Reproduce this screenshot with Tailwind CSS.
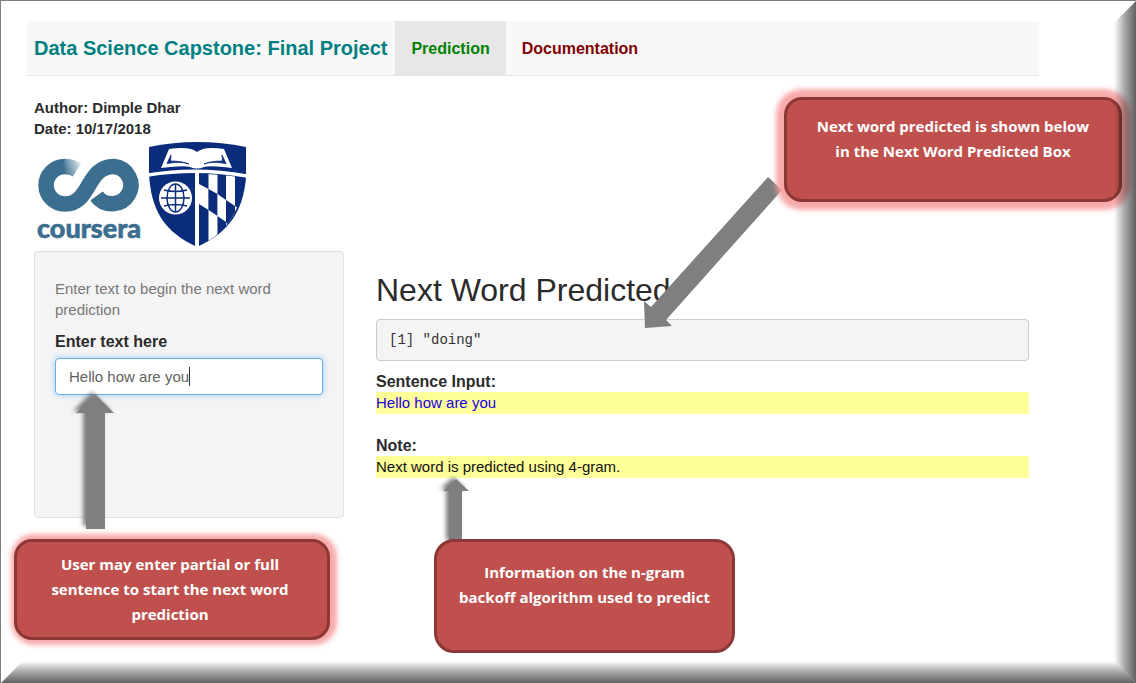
<!DOCTYPE html>
<html lang="en">
<head>
<meta charset="utf-8">
<meta name="viewport" content="width=device-width, initial-scale=1">
<title>Data Science Capstone: Final Project</title>
<script src="https://cdn.jsdelivr.net/npm/@tailwindcss/browser@4"></script>
</head>
<body class="bg-white font-['Liberation_Sans',Arial,sans-serif] text-[15px] leading-[21px] text-[#2b2b2b]">
<div class="relative min-h-screen overflow-hidden border-t border-l border-[#7d7d7d] pt-5 pr-[97px] pl-[25px]">

  <nav class="flex h-[55px] items-stretch border-b border-[#e7e7e7] bg-[#f8f8f8] text-[16px] font-bold">
    <a href="#" class="flex items-center pr-2 pl-2 text-[20px] whitespace-nowrap text-[#008080]">Data Science Capstone: Final Project</a>
    <a href="#prediction" aria-current="page" class="flex items-center bg-[#e7e7e7] px-4 text-[#008000]">Prediction</a>
    <a href="#documentation" class="flex items-center px-4 text-[#800000]">Documentation</a>
  </nav>

  <div class="pt-[21px] pr-2.5 pl-2">
    <p class="font-bold">Author: Dimple Dhar<br>Date: 10/17/2018</p>

    <div class="flex h-[112px]">
      <svg class="h-[111px] w-[112px]" viewBox="34 139 112 111" role="img" aria-label="Coursera">
        <defs>
          <linearGradient id="fade" gradientUnits="userSpaceOnUse" x1="64" y1="172" x2="81" y2="166">
            <stop offset="0" stop-color="#3c6e8f"/><stop offset="1" stop-color="#dbe6ec"/>
          </linearGradient>
        </defs>
        <g fill="none" stroke-width="15.500">
          <path d="M114 166.500 A19 18.700 0 1 1 96.500 196" stroke="#3c6e8f"/>
          <path d="M65 204 C91 204 86 166.500 114 166.500" stroke="#fff" stroke-width="19.500"/>
          <path d="M65 166.500 A18.900 18.700 0 1 0 65 204 C91 204 86 166.500 114 166.500 H115" stroke="#3c6e8f"/>
          <path d="M64.500 166.500 Q71.500 166.500 77 170" stroke="url(#fade)"/>
        </g>
        <text x="37" y="238" font-family="Lato, sans-serif" font-size="27" font-weight="900" fill="#3c6e8f" stroke="#3c6e8f" stroke-width=".6">coursera</text>
      </svg>
      <svg class="h-[111px] w-[104px]" viewBox="146 139 104 111" role="img" aria-label="Johns Hopkins University shield">
        <defs>
          <clipPath id="half"><path d="M199 174 Q222 174 244 178 C241 207 230 231 199 246Z"/></clipPath>
        </defs>
        <path d="M149 147 Q197 137 246 147 V178 C243 210 230 232 197 247 C164 232 151 210 149 174Z" fill="#0b2c7a"/>
        <path d="M148 175 Q197 167 247 176" fill="none" stroke="#fff" stroke-width="3.500"/>
        <path d="M197 172 V248" stroke="#fff" stroke-width="4"/>
        <path d="M169 149 Q190 146 197 152 Q204 146 224 149 L232 168 Q210 165 204 167 Q197 170 190 167 Q184 165 161 168Z" fill="#fff"/>
        <path d="M171 155 L167 163.500 Q182 161 189 164 Q182 161 170.500 161ZM222 155 L226 163.500 Q211 161 204 164 Q211 161 222.500 161Z" fill="#0b2c7a" stroke="#0b2c7a" stroke-width=".8"/>
        <g clip-path="url(#half)">
          <path d="M208.500 170 h9 v80 h-9z M226 170 h9 v80 h-9z" fill="#fff"/>
          <path d="M199 184 L208.500 189 V210 L199 204Z" fill="#fff"/>
          <path d="M208.500 189 L217.500 194 V216 L208.500 210Z" fill="#0b2c7a"/>
          <path d="M217.500 194 L226 200 V222 L217.500 216Z" fill="#fff"/>
          <path d="M226 200 L235 206 V240 L226 222Z" fill="#0b2c7a"/>
          <path d="M235 206 L245 212 V238 L235 232Z" fill="#fff"/>
        </g>
        <circle cx="175.500" cy="198" r="16.500" fill="#fff"/>
        <g fill="none" stroke="#0b2c7a" stroke-width="1.500">
          <path d="M175.500 184 V212 M161 198 H190 M164 190 Q175.500 193 187 190 M164 206 Q175.500 203 187 206"/>
          <ellipse cx="175.500" cy="198" rx="8.500" ry="14"/>
        </g>
      </svg>
    </div>

    <div class="grid grid-cols-[310px_minmax(0,1fr)] gap-8">
      <form class="min-h-[267px] rounded-[4px] border border-[#e0e0e0] bg-[#f4f4f4] px-5 pt-[26px]">
        <p class="text-[#777]">Enter text to begin the next word prediction</p>
        <label for="phrase" class="mt-[11px] block text-[16px] font-bold">Enter text here</label>
        <div class="relative mt-[6px]">
          <input id="phrase" type="text" value="Hello how are you" class="block h-[37px] w-full rounded-[4px] border border-[#66afe9] bg-white px-[13px] text-[#626262] shadow-[0_0_6px_rgba(102,175,233,0.6)] outline-none">
          <span class="absolute top-[9px] left-[134px] h-[19px] w-px bg-[#333]"></span>
        </div>
      </form>

      <section class="pt-[21px]">
        <h1 class="text-[32px] leading-[36px]">Next Word Predicted</h1>
        <pre class="mt-[11px] rounded-[4px] border border-[#ccc] bg-[#f4f4f4] px-3 py-2.5 font-['Liberation_Mono','Courier_New',monospace] text-[14px] leading-[20px] text-[#333]">[1] "doing"</pre>
        <h2 class="mt-[10px] text-[16px] font-bold">Sentence Input:</h2>
        <p class="bg-[#ffff99] leading-[22px] text-[#1a00e6]">Hello how are you</p>
        <h2 class="mt-[21px] text-[16px] font-bold">Note:</h2>
        <p class="bg-[#ffff99] leading-[22px] text-[#111]">Next word is predicted using 4-gram.</p>
      </section>
    </div>
  </div>

  <!-- Annotation arrows -->
  <svg class="pointer-events-none absolute -top-px -left-px h-[683px] w-[1136px]" viewBox="0 0 1136 683" aria-hidden="true">
    <defs><filter id="soft" x="-50%" y="-20%" width="200%" height="140%"><feGaussianBlur stdDeviation="2"/></filter></defs>
    <g fill="#555" opacity=".75" filter="url(#soft)">
      <path d="M92 392 L111 411 H102 V526 H83 V411 H73Z"/>
      <path d="M453 477 L466 489 H459 V540 H446 V489 H440Z"/>
    </g>
    <g fill="#7f7f7f">
      <path d="M95 394 L114 413 H105 V529 H86 V413 H76Z"/>
      <path d="M456 479 L469 491 H462 V541 H449 V491 H443Z"/>
      <path d="M768 177 L782 190 L666 320 L672 326 L645 328 L644 301 L651 307Z"/>
    </g>
  </svg>

  <!-- Annotation callouts -->
  <aside class="absolute top-24 left-[783px] h-[105px] w-[338px] rounded-[18px] border-[3px] border-[#8c3836] bg-[#c0504d] px-5 pt-[14px] text-center font-['Open_Sans',sans-serif] text-[15px] leading-[25px] font-bold text-white shadow-[0_0_5px_8px_rgba(247,160,160,0.9)]">Next word predicted is shown below<br>in the Next Word Predicted Box</aside>
  <aside class="absolute top-[538px] left-[13px] h-[101px] w-[316px] rounded-[18px] border-[3px] border-[#8c3836] bg-[#c0504d] pt-[10px] pr-6 pl-5 text-center font-['Open_Sans',sans-serif] text-[15px] leading-[25px] font-bold text-white shadow-[2px_0_5px_5px_rgba(247,160,160,0.9)]">User may enter partial or full<br>sentence to start the next word<br>prediction</aside>
  <aside class="absolute top-[538px] left-[433px] h-[114px] w-[301px] rounded-[20px] border-[3px] border-[#8c3836] bg-[#c0504d] px-2 pt-[18px] text-center font-['Open_Sans',sans-serif] text-[15px] leading-[25px] font-bold text-white">Information on the n-gram<br>backoff algorithm used to predict</aside>

  <!-- Bevelled frame edges -->
  <div class="pointer-events-none absolute inset-y-0 right-0 w-[22px] bg-linear-to-r from-black/0 via-black/35 to-black/62 [clip-path:polygon(100%_0,100%_100%,0_calc(100%_-_22px),0_22px)]"></div>
  <div class="pointer-events-none absolute inset-x-0 bottom-0 h-[22px] bg-linear-to-b from-black/0 via-black/35 to-black/62 [clip-path:polygon(22px_0,calc(100%_-_22px)_0,100%_100%,0_100%)]"></div>
</div>
</body>
</html>
